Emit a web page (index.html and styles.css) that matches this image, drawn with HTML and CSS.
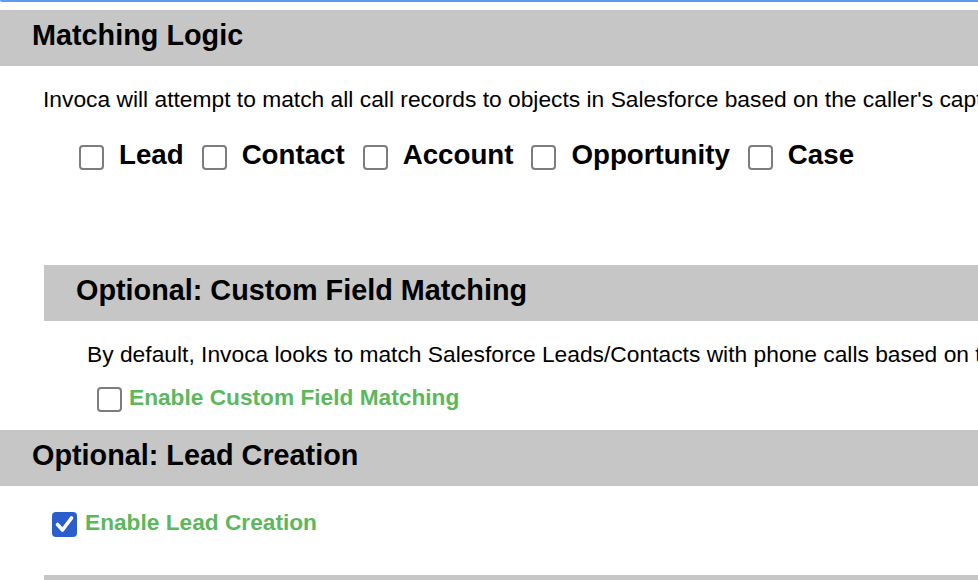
FILE: index.html
```html
<!DOCTYPE html>
<html lang="en">
<head>
<meta charset="utf-8">
<title>Matching Logic</title>
<link rel="stylesheet" href="styles.css">
</head>
<body>
<div class="topline"></div>

<h2 class="band">Matching Logic</h2>
<p class="desc">Invoca will attempt to match all call records to objects in Salesforce based on the caller's captured phone number.</p>
<div class="objects">
  <label class="obj"><span class="cb"></span><span>Lead</span></label>
  <label class="obj"><span class="cb"></span><span>Contact</span></label>
  <label class="obj"><span class="cb"></span><span>Account</span></label>
  <label class="obj"><span class="cb"></span><span>Opportunity</span></label>
  <label class="obj"><span class="cb"></span><span>Case</span></label>
</div>

<div class="sub">
  <h2 class="band">Optional: Custom Field Matching</h2>
  <p class="desc">By default, Invoca looks to match Salesforce Leads/Contacts with phone calls based on the phone number fields.</p>
  <label class="toggle"><span class="cb"></span><span>Enable Custom Field Matching</span></label>
</div>

<h2 class="band band-lead">Optional: Lead Creation</h2>
<label class="toggle toggle-lead"><span class="cb checked"><svg viewBox="0 0 25 25" width="25" height="25"><path d="M5.5 12.5 L10.5 18 L19.5 6" fill="none" stroke="#fff" stroke-width="3.6" stroke-linecap="round" stroke-linejoin="round"/></svg></span><span>Enable Lead Creation</span></label>

<div class="sub sub-last">
  <div class="band band-empty"></div>
</div>
</body>
</html>
```

FILE: styles.css
```css
html, body {
  margin: 0;
  padding: 0;
  overflow: hidden;
  background: #fff;
  font-family: "Liberation Sans", Arial, Helvetica, sans-serif;
  color: #000;
}

.topline {
  height: 2px;
  background: #5b9cf2;
  border-bottom-left-radius: 2px;
  margin-bottom: 8px;
}

.band {
  margin: 0;
  height: 56px;
  box-sizing: border-box;
  padding: 2px 0 8px 32px;
  line-height: 46px;
  font-size: 28.8px;
  font-weight: bold;
  background: #c6c6c6;
  white-space: nowrap;
}

.desc {
  margin: 19px 0 0 43px;
  font-size: 22.8px;
  line-height: 28px;
  white-space: nowrap;
}

.objects {
  display: flex;
  gap: 18px;
  margin: 26px 0 0 79px;
}

.obj {
  display: flex;
  align-items: flex-start;
  gap: 15px;
  font-size: 27.7px;
  font-weight: bold;
  line-height: 32px;
  white-space: nowrap;
}

.cb {
  flex: none;
  width: 25px;
  height: 25px;
  box-sizing: border-box;
  border: 2px solid #7d7d7d;
  border-radius: 4px;
  background: #fff;
  margin-top: 6px;
}

.cb.checked {
  background: #2b5dcd;
  border: none;
  border-radius: 4px;
  display: flex;
}

.sub {
  margin: 94px 0 0 44px;
}

.sub .desc {
  margin-left: 43px;
}

.toggle {
  display: flex;
  align-items: flex-start;
  gap: 7px;
  font-size: 22.7px;
  font-weight: bold;
  line-height: 28px;
  color: #5cb85c;
  white-space: nowrap;
}

.toggle .cb {
  margin-top: 3.5px;
}

.sub .toggle {
  margin: 15px 0 0 53px;
}

.band-lead {
  margin-top: 18.5px;
}

.toggle-lead {
  margin: 22px 0 0 52px;
  gap: 8px;
}

.toggle-lead .cb {
  margin-top: 4px;
}

.sub-last {
  margin-top: 38px;
}
```
